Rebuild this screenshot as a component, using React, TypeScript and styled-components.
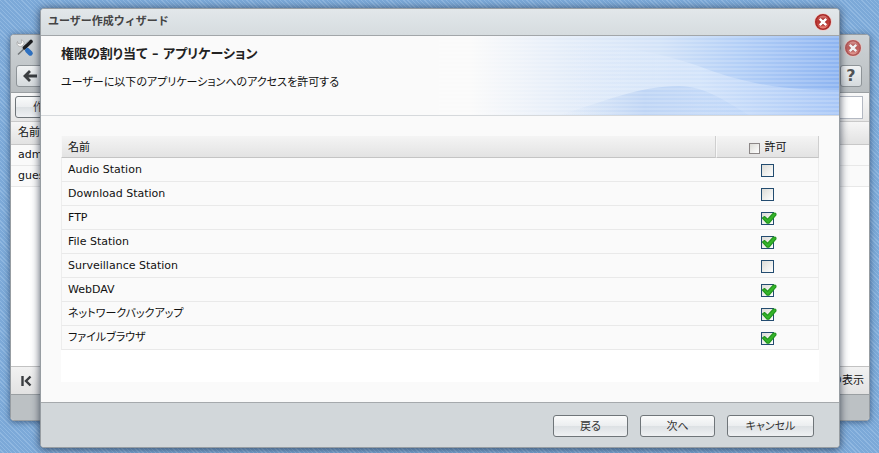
import React, { useState } from "react";
import styled, { createGlobalStyle, css } from "styled-components";

const GlobalStyle = createGlobalStyle`
  * { box-sizing: border-box; }
  body {
    margin: 0;
    font-family: "DejaVu Sans", "Noto Sans CJK JP", sans-serif;
    font-size: 11px;
    line-height: 16px;
    font-feature-settings: "palt";
    color: #111;
  }
  button, input { font: inherit; font-feature-settings: inherit; color: inherit; }
`;

const Desktop = styled.div`
  display: grid;
  grid-template-columns: minmax(0, 1fr);
  min-height: 100vh;
  padding: 8px 9px 5px 10px;
  background: repeating-linear-gradient(45deg, #7ca9d8 0 2px, #90b8e1 2px 3px);
`;

const windowFrame = css`
  grid-area: 1 / 1;
  display: flex;
  flex-direction: column;
  overflow: hidden;
  border: 1px solid #979da2;
  border-radius: 4px;
`;

const BackWindow = styled.section`
  ${windowFrame}
  margin: 26px 0 27px;
  background: #fff;
  box-shadow: 0 1px 6px rgba(20, 40, 70, 0.6);
`;

const Dialog = styled.section`
  ${windowFrame}
  z-index: 1;
  margin: 0 30px;
  background: #fafafa;
  box-shadow: 0 1px 8px rgba(20, 30, 50, 0.75);
`;

const BackHead = styled.header`
  padding: 2px 7px 5px 5px;
  border-bottom: 1px solid #9a9fa2;
  background: linear-gradient(#ced3d6, #b9bec1);
`;

const HeadRow = styled.div`
  display: flex;
  align-items: center;
  justify-content: space-between;
`;

const TitleRow = styled(HeadRow)`
  height: 22px;
  margin-bottom: 6px;
`;

const Cluster = styled.div`
  display: flex;
  align-items: center;
  gap: 3px;
`;

const IconButton = styled.button<{ $muted?: boolean }>`
  display: grid;
  place-items: center;
  padding: 0;
  border: 0;
  background: none;
  cursor: pointer;
  opacity: ${(p) => (p.$muted ? 0.72 : 1)};
`;

const SquareButton = styled.button<{ $wide?: boolean }>`
  display: grid;
  place-items: center;
  width: ${(p) => (p.$wide ? 28 : 22)}px;
  height: 22px;
  padding: 0;
  border: 1px solid #8e9498;
  border-radius: 3px;
  background: linear-gradient(#f1f3f4, #d5dadd);
  font-size: 16px;
  font-weight: 700;
  color: #505356;
`;

const Strip = styled.div`
  display: flex;
  align-items: center;
  justify-content: space-between;
  height: 29px;
  padding: 0 6px 0 4px;
  border-bottom: 1px solid #c9c9c9;
  background: linear-gradient(#f8f8f8, #e6e6e6);
`;

const SearchBox = styled.input`
  width: 150px;
  height: 23px;
  border: 1px solid #b3b8c2;
  background: #fff;
`;

const buttonWidths = { narrow: 58, normal: 75, wide: 87 };

const PushButton = styled.button<{ $size?: keyof typeof buttonWidths }>`
  width: ${(p) => buttonWidths[p.$size ?? "normal"]}px;
  height: 22px;
  padding: 1px 0 0;
  border: 1px solid #6f7579;
  border-radius: 3px;
  background: linear-gradient(#fafbfb 0, #eceef0 48%, #dde1e4 52%, #eff1f3 100%);
  line-height: 19px;
  color: #333;
`;

const UserTable = styled.table`
  width: 100%;
  border-collapse: collapse;
  th {
    height: 22px;
    padding: 1px 7px 0;
    border-bottom: 1px solid #c8c8c8;
    background: linear-gradient(#f6f6f6, #e2e2e2);
    font-weight: 400;
    text-align: left;
  }
  td {
    height: 21px;
    padding: 1px 7px 0;
    border-bottom: 1px solid #e8e8e8;
    background: #fafafa;
  }
`;

const Paging = styled.div`
  display: flex;
  align-items: center;
  justify-content: space-between;
  height: 29px;
  margin-top: auto;
  padding: 0 5px 0 10px;
  border-top: 1px solid #c2c2c2;
  border-bottom: 1px solid #9a9fa2;
  background: linear-gradient(#f2f2f2, #e2e2e2);
  font-feature-settings: normal;
`;

const BackFoot = styled.footer`
  height: 25px;
  background: #bcc1c4;
`;

const DialogBar = styled.header`
  display: flex;
  align-items: center;
  justify-content: space-between;
  height: 27px;
  padding: 0 7px;
  border-bottom: 1px solid #a2a6a9;
  background: linear-gradient(#e2e7ea, #d6dcdf);
`;

const DialogTitle = styled.h2`
  margin: 0;
  font-size: 11px;
  line-height: 18px;
  font-feature-settings: normal;
  color: #444;
`;

const Banner = styled.div`
  display: grid;
  height: 80px;
  border-bottom: 1px solid #d6d9dc;
`;

const BannerArt = styled.svg`
  grid-area: 1 / 1;
  justify-self: end;
  width: 400px;
  height: 79px;
`;

const BannerText = styled.div`
  grid-area: 1 / 1;
  z-index: 1;
  padding: 9px 20px;
`;

const StepTitle = styled.h3`
  margin: 0 0 12px;
  font-size: 13px;
  line-height: 18px;
  color: #222;
`;

const StepText = styled.p`
  margin: 0;
`;

const DialogBody = styled.div`
  flex: 1;
  display: flex;
  padding: 20px;
`;

const ListPanel = styled.div`
  flex: 1;
  min-height: 246px;
  background: #fff;
`;

const RightsTable = styled.table`
  width: 100%;
  border-collapse: separate;
  border-spacing: 0;
  table-layout: fixed;
`;

const HeadCell = styled.th<{ $check?: boolean }>`
  width: ${(p) => (p.$check ? "103px" : "auto")};
  height: 22px;
  padding: 2px 6px 0;
  border-right: 1px solid #cfcfcf;
  border-bottom: 1px solid #c4c4c4;
  border-left: 1px solid #f8f8f8;
  background: linear-gradient(#f4f4f4, #e3e3e3);
  font-weight: 400;
  text-align: left;
`;

const Cell = styled.td<{ $check?: boolean }>`
  height: 24px;
  padding: ${(p) => (p.$check ? "0" : "0 6px")};
  border-bottom: 1px solid #e9e9e9;
  border-${(p) => (p.$check ? "right" : "left")}: 1px solid #ededed;
  background: #fafafa;
`;

const CheckLabel = styled.label`
  display: grid;
  grid-template-columns: 13px;
  justify-content: center;
  align-items: center;
  height: 23px;
  padding-top: 2px;
`;

const Tick = styled.input`
  grid-area: 1 / 1;
  appearance: none;
  width: 13px;
  height: 13px;
  margin: 0;
  border: 1px solid #234c70;
  background: linear-gradient(135deg, #dcdcd7, #fff);
`;

const CheckMark = styled.svg`
  grid-area: 1 / 1;
  z-index: 1;
  width: 16px;
  height: 16px;
  pointer-events: none;
`;

const HeadLabel = styled.label`
  display: flex;
  align-items: center;
  justify-content: center;
  gap: 5px;
`;

const AllTick = styled(Tick)`
  width: 11px;
  height: 11px;
  margin-top: 2px;
  border-color: #8c8787;
`;

const DialogFoot = styled.footer`
  display: flex;
  justify-content: flex-end;
  gap: 12px;
  padding: 12px 25px 10px;
  border-top: 1px solid #a5a9ac;
  background: #d2d7da;
`;

const CloseIcon = ({ id }: { id: string }) => (
  <svg width="18" height="18" viewBox="0 0 18 18" aria-hidden="true">
    <defs>
      <linearGradient id={id} x1="0" y1="0" x2="0" y2="1">
        <stop offset="0" stopColor="#dc8a84" />
        <stop offset="0.4" stopColor="#b93632" />
        <stop offset="0.6" stopColor="#c03c37" />
        <stop offset="1" stopColor="#f5998c" />
      </linearGradient>
    </defs>
    <circle cx="9" cy="9" r="8.7" fill="#f3c5c0" />
    <circle cx="9" cy="9" r="7.2" fill={`url(#${id})`} stroke="#a92a28" strokeWidth="1.6" />
    <path d="M6.200 6.200l5.600 5.600M11.800 6.200l-5.600 5.600" stroke="#9c2523" strokeWidth="4" />
    <path d="M5.800 5.800l6.400 6.400M12.200 5.800l-6.400 6.400" stroke="#fff" strokeWidth="2.600" />
  </svg>
);

const ToolsIcon = () => (
  <svg width="18" height="18" viewBox="0 0 18 18" aria-hidden="true">
    <path d="M5 6l7 7" stroke="#b9bdc0" strokeWidth="2.600" />
    <path d="M1.500 2.500C.5 4 1 6.500 3 7.200c1.200.4 2.400.2 3.200-.5L8 5C8.300 3 7.200 1.300 5.200.8l.8 2.600-1.600 1.500L2 4.400z" fill="#fafafa" stroke="#a0a0a0" strokeWidth=".7" />
    <path d="M2 15.500l8-7.500" stroke="#6f7376" strokeWidth="1.400" />
    <path d="M8.500 8.800L15 2.500" stroke="#1c1d20" strokeWidth="3.600" strokeLinecap="round" />
    <path d="M9.800 4.800L13 1.800" stroke="#8a8d90" strokeWidth="1" />
    <path d="M11.500 11.500l2.800 2.700" stroke="#2e70c0" strokeWidth="5" strokeLinecap="round" />
  </svg>
);

const BannerDrawing = () => (
  <BannerArt viewBox="0 0 400 79" preserveAspectRatio="none" aria-hidden="true">
    <defs>
      <linearGradient id="sky" x1="0" x2="1" y1="0" y2="0">
        <stop offset="0.08" stopColor="#fafafa" />
        <stop offset="0.3" stopColor="#e6eef9" />
        <stop offset="0.55" stopColor="#d3e3f8" />
        <stop offset="0.75" stopColor="#b3cff7" />
        <stop offset="1" stopColor="#8db4f1" />
      </linearGradient>
      <linearGradient id="glow" x1="0" x2="1" y1="0" y2="0">
        <stop offset="0.3" stopColor="#e0ebfb" stopOpacity="0" />
        <stop offset="0.65" stopColor="#d8e7fb" stopOpacity="0.75" />
        <stop offset="1" stopColor="#aecbf8" stopOpacity="0.8" />
      </linearGradient>
      <linearGradient id="hill" x1="0" x2="1" y1="0" y2="0">
        <stop offset="0" stopColor="#cfdff5" stopOpacity="0" />
        <stop offset="0.45" stopColor="#bfd5f5" />
        <stop offset="1" stopColor="#b7d2f8" stopOpacity="0.4" />
      </linearGradient>
      <pattern id="lines" width="4" height="4" patternUnits="userSpaceOnUse">
        <rect width="4" height="2" fill="#ffffff" opacity="0.16" />
      </pattern>
    </defs>
    <rect width="400" height="79" fill="url(#sky)" />
    <path d="M0 79V0C120 0 210 10 270 34 320 52 360 54 400 54V79Z" fill="url(#glow)" />
    <path d="M120 79C170 64 200 50 240 50 265 50 285 64 310 79Z" fill="url(#hill)" />
    <rect width="400" height="79" fill="url(#lines)" />
  </BannerArt>
);

const applications = [
  { name: "Audio Station", allowed: false },
  { name: "Download Station", allowed: false },
  { name: "FTP", allowed: true },
  { name: "File Station", allowed: true },
  { name: "Surveillance Station", allowed: false },
  { name: "WebDAV", allowed: true },
  { name: "ネットワークバックアップ", allowed: true },
  { name: "ファイルブラウザ", allowed: true },
];

export default function App() {
  const [rows, setRows] = useState(applications);
  const setAllowed = (name: string, allowed: boolean) =>
    setRows((list) => list.map((r) => (r.name === name ? { ...r, allowed } : r)));

  return (
    <>
      <GlobalStyle />
      <Desktop>
        <BackWindow>
          <BackHead>
            <TitleRow>
              <ToolsIcon />
              <Cluster>
                <IconButton aria-label="最大化" $muted>
                  <svg width="18" height="18" viewBox="0 0 18 18">
                    <circle cx="9" cy="9" r="8.500" fill="#444" />
                  </svg>
                </IconButton>
                <IconButton aria-label="閉じる" $muted>
                  <CloseIcon id="close-back" />
                </IconButton>
              </Cluster>
            </TitleRow>
            <HeadRow>
              <SquareButton $wide aria-label="戻る">
                <svg width="14" height="12" viewBox="0 0 14 12">
                  <path d="M7 1L2 6l5 5M2 6h12" fill="none" stroke="#3a3d40" strokeWidth="2.800" />
                </svg>
              </SquareButton>
              <SquareButton aria-label="ヘルプ">?</SquareButton>
            </HeadRow>
          </BackHead>
          <Strip>
            <PushButton $size="narrow">作成</PushButton>
            <SearchBox type="search" aria-label="検索" />
          </Strip>
          <UserTable>
            <thead>
              <tr><th>名前</th></tr>
            </thead>
            <tbody>
              <tr><td>admin</td></tr>
              <tr><td>guest</td></tr>
            </tbody>
          </UserTable>
          <Paging>
            <IconButton aria-label="最初のページ">
              <svg width="11" height="12" viewBox="0 0 11 12">
                <path d="M1.500 1v10M9.500 1.500L5 6l4.500 4.500" fill="none" stroke="#3a3d40" strokeWidth="2.400" />
              </svg>
            </IconButton>
            <span>の表示</span>
          </Paging>
          <BackFoot />
        </BackWindow>

        <Dialog role="dialog" aria-labelledby="dialog-title">
          <DialogBar>
            <DialogTitle id="dialog-title">ユーザー作成ウィザード</DialogTitle>
            <IconButton aria-label="閉じる">
              <CloseIcon id="close-front" />
            </IconButton>
          </DialogBar>
          <Banner>
            <BannerDrawing />
            <BannerText>
              <StepTitle>権限の割り当て – アプリケーション</StepTitle>
              <StepText>ユーザーに以下のアプリケーションへのアクセスを許可する</StepText>
            </BannerText>
          </Banner>
          <DialogBody>
            <ListPanel>
              <RightsTable>
                <thead>
                  <tr>
                    <HeadCell>名前</HeadCell>
                    <HeadCell $check>
                      <HeadLabel>
                        <AllTick
                          type="checkbox"
                          onChange={(e) => {
                            const allowed = e.target.checked;
                            setRows((list) => list.map((r) => ({ ...r, allowed })));
                          }}
                        />
                        許可
                      </HeadLabel>
                    </HeadCell>
                  </tr>
                </thead>
                <tbody>
                  {rows.map((row) => (
                    <tr key={row.name}>
                      <Cell>{row.name}</Cell>
                      <Cell $check>
                        <CheckLabel>
                          <Tick
                            type="checkbox"
                            aria-label={row.name}
                            checked={row.allowed}
                            onChange={(e) => setAllowed(row.name, e.target.checked)}
                          />
                          {row.allowed && (
                            <CheckMark viewBox="0 0 16 16" aria-hidden="true">
                              <path
                                d="M1.500 7L3.500 5.500l3 2.800L12.500 2l2.200.3.300 1.500L8 12.200H6z"
                                fill="#35b62a"
                                stroke="#23961f"
                                strokeWidth="1.200"
                                strokeLinejoin="round"
                              />
                            </CheckMark>
                          )}
                        </CheckLabel>
                      </Cell>
                    </tr>
                  ))}
                </tbody>
              </RightsTable>
            </ListPanel>
          </DialogBody>
          <DialogFoot>
            <PushButton>戻る</PushButton>
            <PushButton>次へ</PushButton>
            <PushButton $size="wide">キャンセル</PushButton>
          </DialogFoot>
        </Dialog>
      </Desktop>
    </>
  );
}
